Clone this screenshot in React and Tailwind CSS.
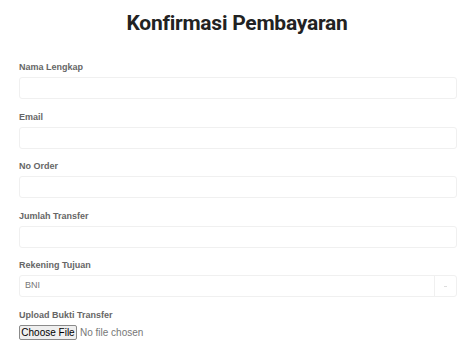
import React from 'react'

const fields = ['Nama Lengkap', 'Email', 'No Order', 'Jumlah Transfer']

function Label({ children }) {
  return (
    <label className="block text-[9px] leading-[12px] font-bold text-[#666] mb-[4px]">
      {children}
    </label>
  )
}

export default function App() {
  return (
    <div className="w-[474px] h-[355px] overflow-hidden bg-white px-[19px] pt-[9px] font-['Liberation_Sans',Arial,sans-serif]">
      <h1 className="text-center font-['Roboto',sans-serif] text-[21px] tracking-[-0.25px] leading-[28px] font-bold text-[#222] mb-[24px]">
        Konfirmasi Pembayaran
      </h1>

      {fields.map(f => (
        <div key={f} className="mb-[11.5px]">
          <Label>{f}</Label>
          <div className="h-[22px] w-[438px] rounded-[3px] border border-[#f0f0f0] bg-white" />
        </div>
      ))}

      <div className="mb-[11.5px]">
        <Label>Rekening Tujuan</Label>
        <div className="h-[22px] w-[438px] rounded-[3px] border border-[#f0f0f0] bg-white flex items-center">
          <span className="flex-1 pl-[5px] text-[9px] text-[#777]">BNI</span>
          <div className="h-full w-[22px] border-l border-[#f0f0f0] flex items-center justify-center">
            <div className="w-[3px] h-px bg-[#ddd]" />
          </div>
        </div>
      </div>

      <div>
        <Label>Upload Bukti Transfer</Label>
        <div className="flex items-center">
          <span className="h-[15px] w-[58px] flex items-center justify-center rounded-[2px] border border-[#8a8a8a] bg-[#efefef] text-[10px] text-black">
            Choose File
          </span>
          <span className="ml-[3px] text-[10px] text-[#777]">No file chosen</span>
        </div>
      </div>
    </div>
  )
}
